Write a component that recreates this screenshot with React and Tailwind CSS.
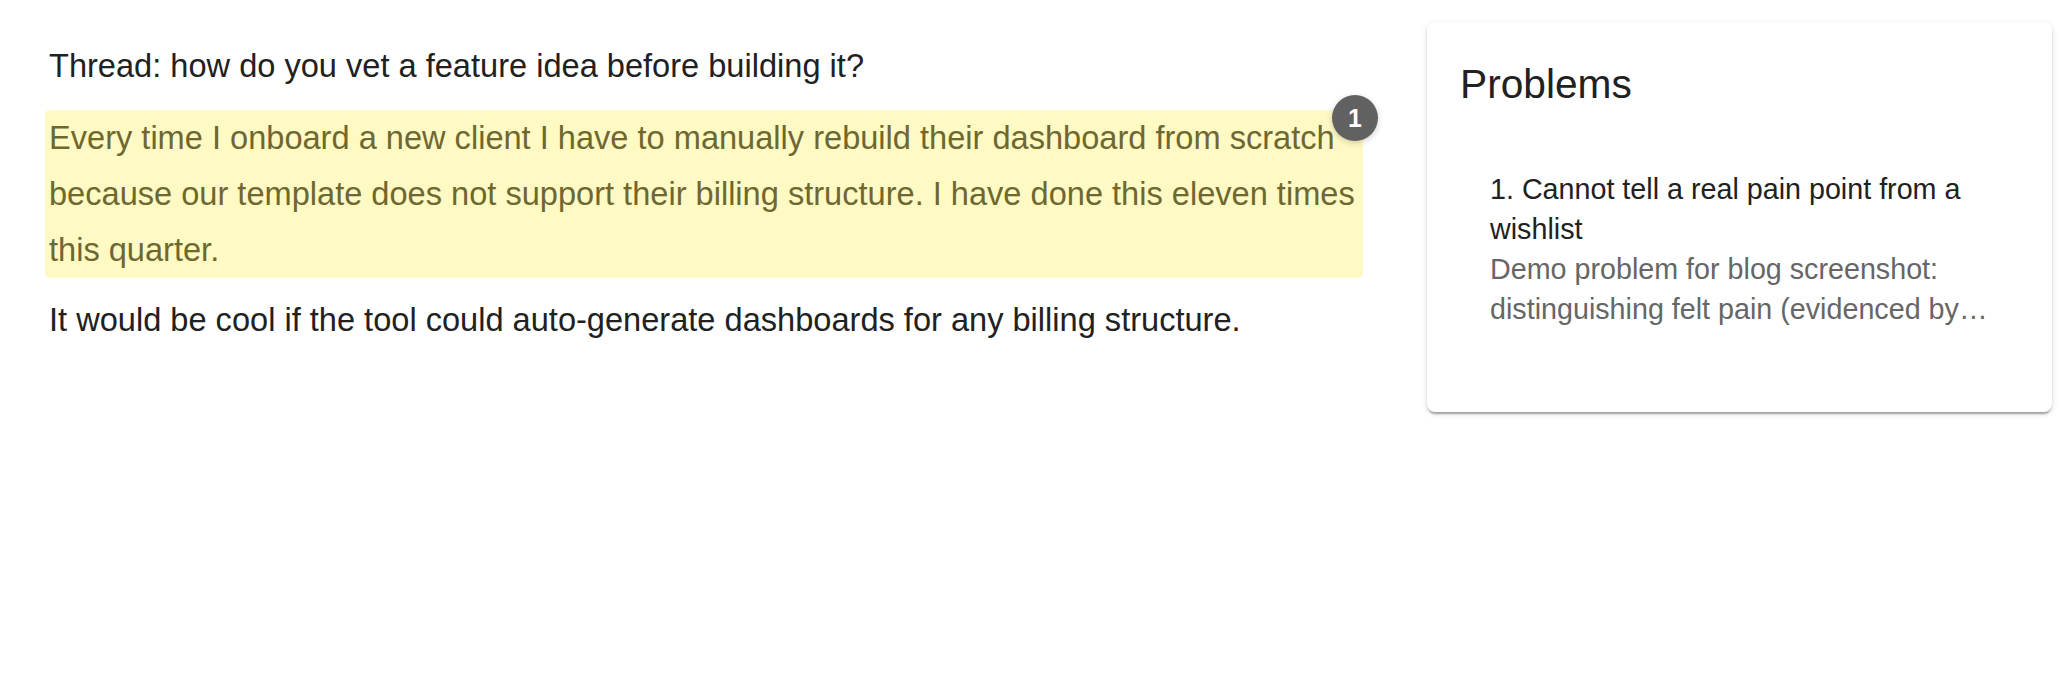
// Thread view with a highlighted quote and the problems side panel
const problems = [
  {
    title: 'Cannot tell a real pain point from a wishlist',
    summary:
      'Demo problem for blog screenshot: distinguishing felt pain (evidenced by workarounds and repeated effort) from wishlist requests.',
  },
];

function Highlight({ count, children }) {
  return (
    <div className="relative rounded-[5px] bg-[#fff9c4] pl-[4px] pr-0 text-[#6e6830] leading-[56px]">
      {children}
      <span className="absolute -top-[15px] -right-[15px] flex h-[46px] w-[46px] items-center justify-center rounded-full bg-[#616161] text-[25px] font-bold text-white shadow-[0_2px_6px_rgba(0,0,0,0.18)]">
        {count}
      </span>
    </div>
  );
}

export default function App() {
  return (
    <div
      className="flex h-[700px] w-[2068px] bg-white text-[#212121]"
      style={{ fontFamily: '"Liberation Sans", Arial, sans-serif' }}
    >
      {/* Thread text */}
      <div className="w-[1363px] shrink-0 pl-[45px] pt-[38px] text-[32.6px]">
        <p className="mb-[16px] px-[4px] leading-[56px]">
          Thread: how do you vet a feature idea before building it?
        </p>
        <Highlight count={1}>
          Every time I onboard a new client I have to manually rebuild their dashboard from scratch
          because our template does not support their billing structure. I have done this eleven
          times this quarter.
        </Highlight>
        <p className="mt-[14px] px-[4px] leading-[56px]">
          It would be cool if the tool could auto-generate dashboards for any billing structure.
        </p>
      </div>

      {/* Problems panel */}
      <div className="ml-[64px] mt-[22px] h-[390px] w-[625px] shrink-0 rounded-[8px] bg-white p-[33px] shadow-[0_4px_2px_-2px_rgba(0,0,0,0.2),0_2px_2px_0_rgba(0,0,0,0.14),0_2px_6px_0_rgba(0,0,0,0.12)]">
        <h2 className="text-[40.7px] leading-[58px]">Problems</h2>
        <ul className="pt-[56px]">
          {problems.map((p, i) => (
            <li key={i} className="pl-[30px] pr-[30px] text-[28.7px] leading-[40px]">
              <div>{`${i + 1}. ${p.title}`}</div>
              <div className="line-clamp-2 text-[#666666]">{p.summary}</div>
            </li>
          ))}
        </ul>
      </div>
    </div>
  );
}
